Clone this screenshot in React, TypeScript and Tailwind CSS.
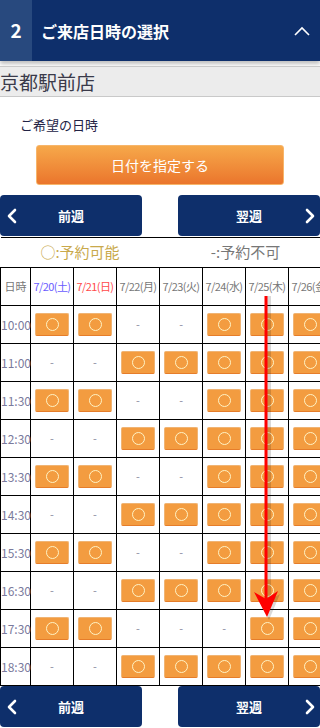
import React from 'react'

const dates = [
  { label: '7/20(土)', color: 'text-[#6a5cff]' },
  { label: '7/21(日)', color: 'text-[#ff4a4a]' },
  { label: '7/22(月)', color: 'text-[#777777]' },
  { label: '7/23(火)', color: 'text-[#777777]' },
  { label: '7/24(水)', color: 'text-[#777777]' },
  { label: '7/25(木)', color: 'text-[#777777]' },
  { label: '7/26(金)', color: 'text-[#777777]' },
]

const A = 'OO--OOO'
const B = '--OOOOO'

const rows: [string, string][] = [
  ['10:00', A],
  ['11:00', B],
  ['11:30', A],
  ['12:30', B],
  ['13:30', A],
  ['14:30', B],
  ['15:30', A],
  ['16:30', B],
  ['17:30', 'OO---OO'],
  ['18:30', B],
]

const font = { fontFamily: '"Noto Sans CJK JP", "Noto Sans", sans-serif' }

function Chevron({ dir }: { dir: 'left' | 'right' }) {
  return (
    <svg width="10" height="16" viewBox="0 0 10 16" fill="none">
      <path
        d={dir === 'left' ? 'M8 2L2 8L8 14' : 'M2 2L8 8L2 14'}
        stroke="white"
        strokeWidth="2.6"
        strokeLinecap="round"
        strokeLinejoin="round"
      />
    </svg>
  )
}

function WeekNav() {
  return (
    <div className="flex h-[41px] justify-between">
      <button className="relative flex w-[142px] items-center justify-center rounded-[4px] bg-[#0e2f6b] text-[13px] font-bold text-white">
        <span className="absolute left-[7px] top-[13px]">
          <Chevron dir="left" />
        </span>
        前週
      </button>
      <button className="relative flex w-[142px] items-center justify-center rounded-[4px] bg-[#0e2f6b] text-[13px] font-bold text-white">
        翌週
        <span className="absolute right-[5px] top-[13px]">
          <Chevron dir="right" />
        </span>
      </button>
    </div>
  )
}

function Slot() {
  return (
    <div className="mx-auto flex h-[23px] w-[34px] items-center justify-center rounded-[2px] border border-[#f0b474] border-b-[#e67d2a] bg-[#f39c40]">
      <span className="block h-[13px] w-[13px] rounded-full border-[1.5px] border-[#fff3c4]" />
    </div>
  )
}

export default function App() {
  return (
    <div className="relative h-[728px] w-[320px] overflow-hidden bg-white" style={font}>
      <div className="flex h-[61px] items-center bg-[#0e2f6b] text-white shadow-[0_3px_4px_rgba(0,0,0,0.25)]">
        <div className="flex h-full w-[32px] items-center justify-center bg-[#28497e] text-[19px] font-bold">
          2
        </div>
        <div className="ml-[9px] flex-1 text-[16px] font-bold">ご来店日時の選択</div>
        <svg className="mr-[9px]" width="18" height="12" viewBox="0 0 18 12" fill="none">
          <path d="M2 10L9 3L16 10" stroke="white" strokeWidth="1.6" />
        </svg>
      </div>

      <div className="mt-[5px] flex h-[31px] items-center border-y border-[#c9c9c9] bg-[#ececec] text-[19px] leading-none text-[#3a3a4a]">
        京都駅前店
      </div>

      <div className="pl-[20px] pt-[21px] text-[13px] leading-none text-[#222244]">ご希望の日時</div>

      <div className="mt-[14px] flex justify-center">
        <button className="flex h-[40px] w-[248px] items-center justify-center rounded-[3px] border border-[#f7b56a] bg-gradient-to-b from-[#f6a84a] to-[#ea752c] text-[14px] text-white">
          日付を指定する
        </button>
      </div>

      <div className="mt-[10px]">
        <WeekNav />
      </div>

      <div className="mt-[1px] w-[320px] overflow-hidden">
        <table className="w-[331px] table-fixed border-collapse border-t border-black">
          <colgroup>
            <col className="w-[30px]" />
            {dates.map((d) => (
              <col key={d.label} className="w-[43px]" />
            ))}
          </colgroup>
          <tbody>
            <tr className="h-[30px]">
              <td colSpan={4} className="text-center text-[15px] text-[#c9a94c]">
                ○:予約可能
              </td>
              <td colSpan={4} className="text-center text-[15px] text-[#777777]">
                -:予約不可
              </td>
            </tr>
            <tr className="h-[38px]">
              <td className="border border-black text-center text-[11px] text-[#777777]">日時</td>
              {dates.map((d) => (
                <td
                  key={d.label}
                  className={`overflow-hidden whitespace-nowrap border border-black text-center text-[11px] tracking-[-0.6px] ${d.color}`}
                >
                  {d.label}
                </td>
              ))}
            </tr>
            {rows.map(([time, pattern]) => (
              <tr key={time} className="h-[38px]">
                <td className="border border-black text-right text-[12px] text-[#7a7a9c]">{time}</td>
                {pattern.split('').map((c, i) => (
                  <td key={i} className="border border-black p-0 text-center text-[11px] text-[#8a8aa0]">
                    {c === 'O' ? <Slot /> : '-'}
                  </td>
                ))}
              </tr>
            ))}
          </tbody>
        </table>
      </div>

      <WeekNav />

      <svg className="absolute left-0 top-0" width="320" height="728" viewBox="0 0 320 728" fill="none">
        <line x1="269" y1="296" x2="269" y2="604" stroke="rgba(0,0,0,0.15)" strokeWidth="4" />
        <path d="M257 595L268 601L280 594L269 620Z" fill="rgba(0,0,0,0.15)" />
        <line x1="266" y1="296" x2="266" y2="604" stroke="#ff0000" strokeWidth="3" />
        <path d="M254 592L266 599L278 591L267 617Z" fill="#ff0000" />
      </svg>
    </div>
  )
}
